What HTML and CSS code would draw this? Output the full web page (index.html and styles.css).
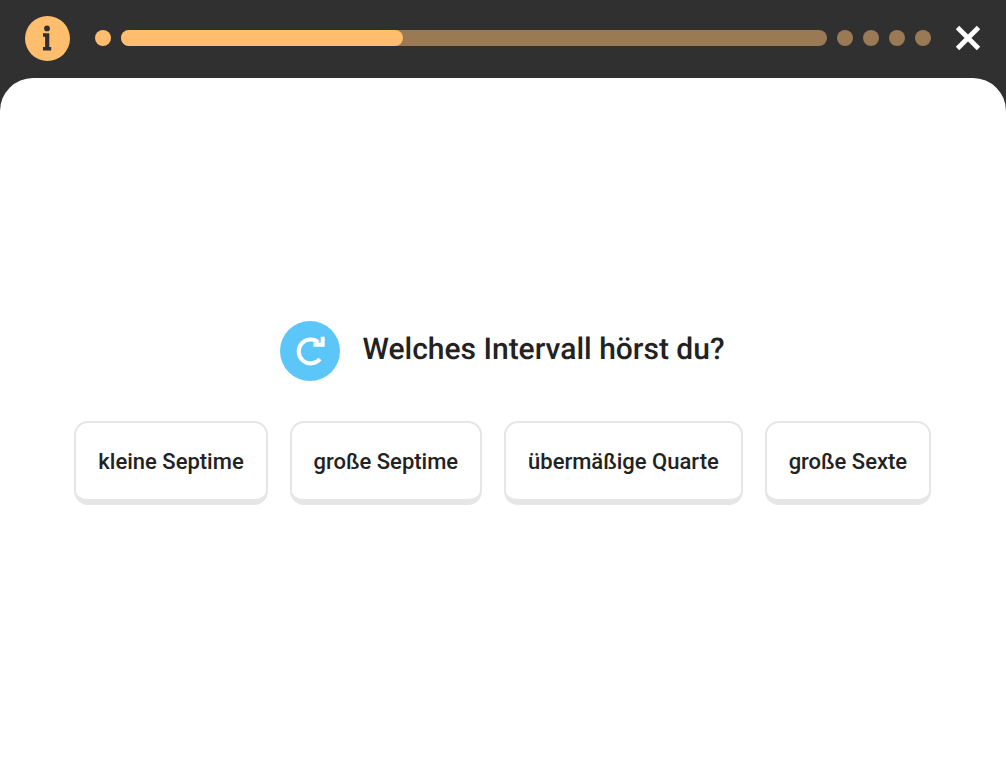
FILE: index.html
```html
<!DOCTYPE html>
<html lang="de">
<head>
  <meta charset="UTF-8" />
  <title>Intervalle</title>
  <link rel="stylesheet" href="styles.css">
</head>
<body>
  <div class="topbar">
    <svg class="info" viewBox="0 0 45 45" aria-label="Info">
      <circle cx="22.5" cy="22.5" r="22.5" fill="#ffbd6e"/>
      <circle cx="22" cy="12.4" r="2.9" fill="#303030"/>
      <path d="M18 17.3h6.3v13.6h1.9v3.5H18v-3.5h2.1V20.8H18z" fill="#303030"/>
    </svg>
    <div class="progress">
      <span class="dot done"></span>
      <div class="bar"><div class="bar-fill" style="width: 40%"></div></div>
      <span class="dot"></span>
      <span class="dot"></span>
      <span class="dot"></span>
      <span class="dot"></span>
    </div>
    <svg class="close" viewBox="0 0 26 26" aria-label="Schließen">
      <path d="M2.5 2.5l21 21M23.5 2.5l-21 21" stroke="#fff" stroke-width="4.8" fill="none"/>
    </svg>
  </div>

  <div class="main">
    <div class="question">
      <button class="replay" aria-label="Nochmal">
        <svg viewBox="0 0 60 60">
          <path d="M38.4 21.2A12 12 0 1 0 40 38" stroke="#fff" stroke-width="4" fill="none"/>
          <path d="M33.5 21.6h7.2V15.8h4v9.9H33.5z" fill="#fff"/>
        </svg>
      </button>
      <h1>Welches Intervall hörst du?</h1>
    </div>
    <div class="answers">
      <button class="answer">kleine Septime</button>
      <button class="answer">große Septime</button>
      <button class="answer">übermäßige Quarte</button>
      <button class="answer">große Sexte</button>
    </div>
  </div>
</body>
</html>
```

FILE: styles.css
```css
html, body {
  height: 100%;
}

body {
  margin: 0;
  background: #303030;
  font-family: Roboto, sans-serif;
  color: #222;
  text-rendering: geometricPrecision;
  display: flex;
  flex-direction: column;
}

.topbar {
  height: 78px;
  flex: none;
  display: flex;
  align-items: center;
  padding: 0 25px 2px;
  box-sizing: border-box;
}

.info {
  width: 45px;
  height: 45px;
  flex: none;
}

.progress {
  flex: 1;
  display: flex;
  align-items: center;
  gap: 10px;
  margin: 0 24px 0 25px;
}

.dot {
  width: 16px;
  height: 16px;
  border-radius: 50%;
  background: #9a7a55;
  flex: none;
}

.dot.done {
  background: #ffbd6e;
}

.bar {
  flex: 1;
  height: 16px;
  border-radius: 8px;
  background: #9a7a55;
}

.bar-fill {
  height: 100%;
  border-radius: 8px;
  background: #ffbd6e;
}

.close {
  width: 26px;
  height: 26px;
  flex: none;
}

.main {
  flex: 1;
  background: #fff;
  border-radius: 33px 33px 0 0;
  display: flex;
  flex-direction: column;
  align-items: center;
  justify-content: center;
  gap: 40px;
  padding-bottom: 17px;
}

.question {
  display: flex;
  align-items: center;
  gap: 22px;
  padding-right: 1px;
}

.replay {
  width: 60px;
  height: 60px;
  padding: 0;
  border: none;
  border-radius: 50%;
  background: #5cc6f9;
}

.replay svg {
  display: block;
  width: 60px;
  height: 60px;
}

h1 {
  margin: 0 0 3px;
  font-size: 30px;
  font-weight: 500;
}

.answers {
  display: flex;
  gap: 22px;
  padding-right: 0.5px;
}

.answer {
  height: 84px;
  box-sizing: border-box;
  padding: 0 21.95px;
  background: #fff;
  border: 2px solid #e6e6e6;
  border-bottom-width: 6px;
  border-radius: 14px;
  font-family: inherit;
  font-size: 22px;
  font-weight: 500;
  color: #222;
}
```
